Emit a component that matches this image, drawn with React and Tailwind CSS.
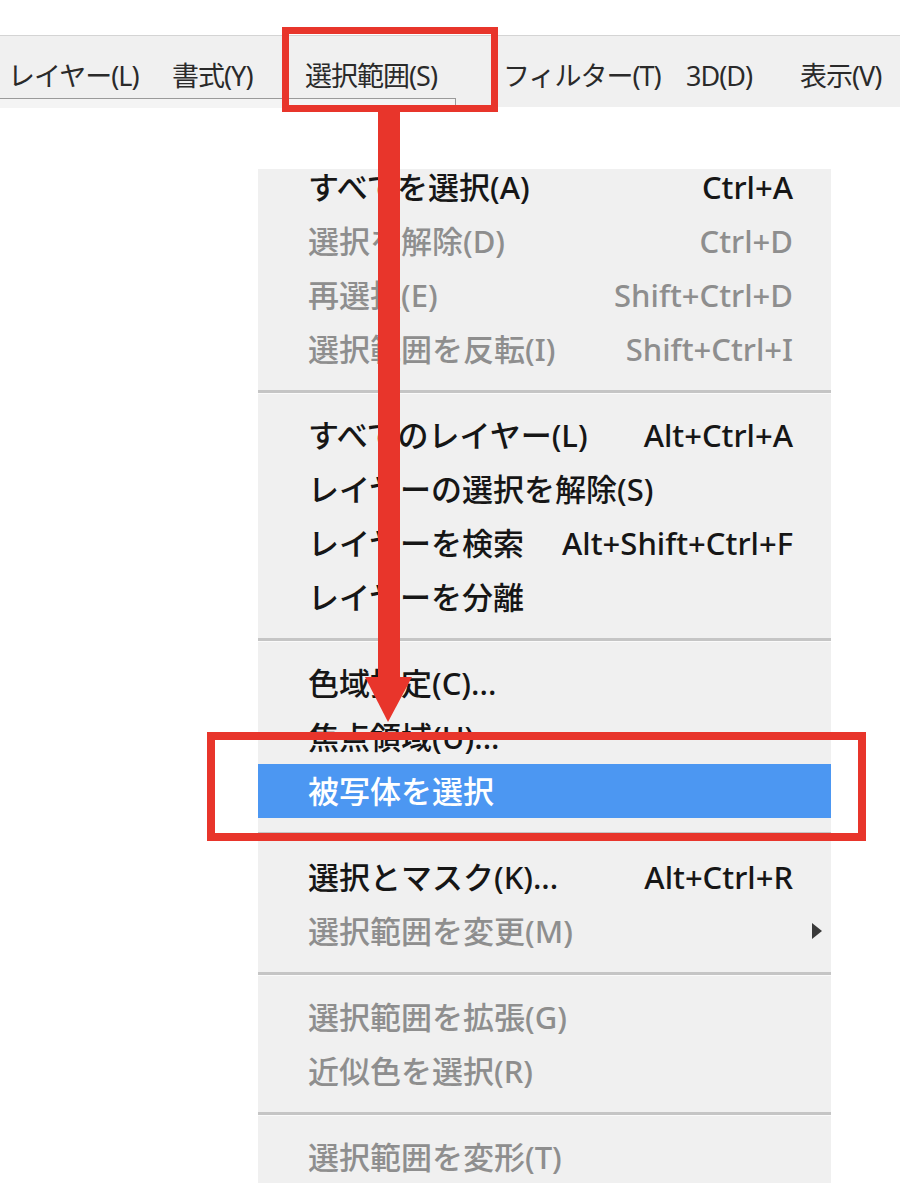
import React from 'react';

const FONT = { fontFamily: '"Segoe UI", "Noto Sans", "Noto Sans CJK JP", sans-serif' };

const menuBar = [
  { label: 'レイヤー(L)', w: 'w-[164px]' },
  { label: '書式(Y)', w: 'w-[133px]' },
  { label: '選択範囲(S)', w: 'w-[198px]' },
  { label: 'フィルター(T)', w: 'w-[183px]' },
  { label: '3D(D)', w: 'w-[114px]' },
  { label: '表示(V)', w: 'w-[120px]' },
];

const groups = [
  [
    { label: 'すべてを選択(A)', shortcut: 'Ctrl+A' },
    { label: '選択を解除(D)', shortcut: 'Ctrl+D', disabled: true },
    { label: '再選択(E)', shortcut: 'Shift+Ctrl+D', disabled: true },
    { label: '選択範囲を反転(I)', shortcut: 'Shift+Ctrl+I', disabled: true },
  ],
  [
    { label: 'すべてのレイヤー(L)', shortcut: 'Alt+Ctrl+A' },
    { label: 'レイヤーの選択を解除(S)' },
    { label: 'レイヤーを検索', shortcut: 'Alt+Shift+Ctrl+F' },
    { label: 'レイヤーを分離' },
  ],
  [
    { label: '色域指定(C)...' },
    { label: '焦点領域(U)...' },
    { label: '被写体を選択', active: true },
  ],
  [
    { label: '選択とマスク(K)...', shortcut: 'Alt+Ctrl+R' },
    { label: '選択範囲を変更(M)', disabled: true, submenu: true },
  ],
  [
    { label: '選択範囲を拡張(G)', disabled: true },
    { label: '近似色を選択(R)', disabled: true },
  ],
  [
    { label: '選択範囲を変形(T)', disabled: true },
  ],
];

const MenuRow = ({ item, first }) => {
  const color = item.active
    ? 'bg-[#4c97f2] text-white'
    : item.disabled
    ? 'text-[#8e8e8e]'
    : 'text-[#161616]';
  return (
    <div
      className={`flex items-center justify-between whitespace-nowrap pl-[50px] pr-[38px] text-[31px] font-medium leading-none ${color} ${
        first ? 'h-[45px] pb-[8px]' : 'h-[54px]'
      }`}
    >
      <span>{item.label}</span>
      {item.shortcut && <span>{item.shortcut}</span>}
      {item.submenu && (
        <svg className="mr-[-29px] h-[16px] w-[10px]" viewBox="0 0 10 16">
          <path d="M0 0 L10 8 L0 16 Z" fill="#3a3a3a" />
        </svg>
      )}
    </div>
  );
};

const Separator = () => (
  <div className="flex h-[32px] flex-col justify-center">
    <div className="h-[3px] bg-[#c5c5c5]" />
    <div className="h-[1px] bg-[#fafafa]" />
  </div>
);

export default function App() {
  return (
    <div className="relative h-[1183px] w-[900px] overflow-hidden bg-white" style={FONT}>
      {/* menu bar */}
      <div className="mt-[35px] h-[72px] border-t border-[#d4d4d4] bg-[#f0f0f0]">
        <div className="flex h-[62px] items-center whitespace-nowrap pl-[8px] pt-[16px] text-[27px] leading-none tracking-[-1px] text-[#2a2a2a]">
          {menuBar.map((m) => (
            <span key={m.label} className={`${m.w} shrink-0`}>
              {m.label}
            </span>
          ))}
        </div>
        <div className="flex">
          <div className="h-[10px] w-[456px] border-r border-t border-[#9a9a9a] bg-[#f4f4f4]" />
        </div>
      </div>

      {/* dropdown */}
      <div className="ml-[258px] mt-[62px] w-[573px] bg-[#f0f0f0]">
        {groups.map((group, gi) => (
          <div key={gi}>
            {gi > 0 && <Separator />}
            {group.map((item, ii) => (
              <MenuRow key={item.label} item={item} first={gi === 0 && ii === 0} />
            ))}
          </div>
        ))}
      </div>

      {/* annotations */}
      <div className="absolute left-[282px] top-[27px] h-[85px] w-[216px] border-[7px] border-[#e8352b]" />
      <div className="absolute left-[207px] top-[732px] h-[109px] w-[659px] border-[8px] border-[#e8352b]" />
      <svg className="absolute left-[360px] top-[110px]" width="60" height="615" viewBox="0 0 60 615">
        <rect x="18" y="0" width="22" height="572" fill="#e8352b" />
        <polygon points="5,567 52,567 28,612" fill="#e8352b" />
      </svg>
    </div>
  );
}
